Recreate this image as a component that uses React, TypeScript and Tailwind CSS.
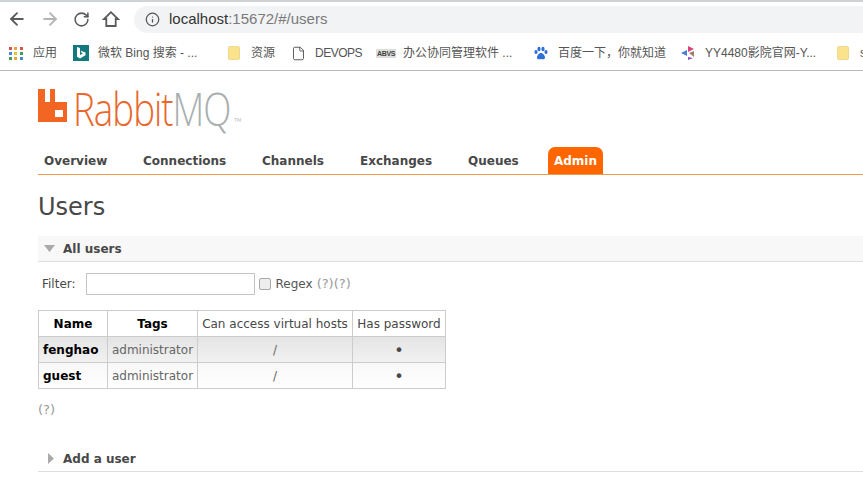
import { ArrowLeft, ArrowRight, RotateCw, Info, File } from "lucide-react";

const CJK = "font-['Liberation_Sans','Noto_Sans_CJK_SC',sans-serif]";
const VERDANA = "font-['DejaVu_Sans',sans-serif]";

const NAV = [
  { label: "Overview", w: "w-[99px]" },
  { label: "Connections", w: "w-[119px]" },
  { label: "Channels", w: "w-[98px]" },
  { label: "Exchanges", w: "w-[108px]" },
  { label: "Queues", w: "w-[86px]" },
];

const USERS = [
  { name: "fenghao", row: "bg-gradient-to-b from-[#e4e4e4] to-[#f2f2f2]" },
  { name: "guest", row: "bg-gradient-to-b from-[#f8f8f8] to-white" },
];

function Folder() {
  return <div className="w-[12px] h-[14px] rounded-[2px] bg-[#fbe38e] border border-[#eed98f]" />;
}

function AppsGrid() {
  const colors = ["#d9534f", "#e8a33d", "#d9534f", "#4a86d8", "#e8c33d", "#3f9b55", "#3f9b55", "#e8a33d", "#4a86d8"];
  return (
    <div className="grid grid-cols-3 gap-[2px] w-[14px]">
      {colors.map((c, i) => (
        <svg key={i} width="3" height="3" className="block">
          <rect width="3" height="3" fill={c} />
        </svg>
      ))}
    </div>
  );
}

function Bookmark({ icon, label, w, tight }: { icon: React.ReactNode; label: string; w: string; tight?: boolean }) {
  return (
    <div className={`flex items-center gap-[9px] shrink-0 ${w}`}>
      <div className="w-[16px] flex justify-center shrink-0">{icon}</div>
      <span className={`text-[12px] text-[#555] whitespace-nowrap ${tight ? "tracking-[-0.5px]" : ""}`}>{label}</span>
    </div>
  );
}

export default function App() {
  return (
    <div className={`w-[863px] h-[482px] overflow-hidden bg-white ${CJK}`}>
      <div className="h-[2px] bg-[#cfd3d6]" />
      {/* toolbar */}
      <div className="h-[34px] flex items-center pl-[7px] gap-[13px] bg-white">
        <ArrowLeft size={20} strokeWidth={2.2} className="text-[#5a5a5a] shrink-0" />
        <ArrowRight size={20} strokeWidth={2.2} className="text-[#b4b4b4] shrink-0" />
        <RotateCw size={17} strokeWidth={2.2} className="text-[#5a5a5a] shrink-0" />
        <svg width="18" height="18" viewBox="0 0 18 18" className="shrink-0 -ml-[1px]">
          <path d="M9 2.200 2 9h2.300v7h9.400V9H16z" fill="none" stroke="#5a5a5a" strokeWidth="1.800" strokeLinejoin="miter" />
        </svg>
        <div className="flex-1 h-[27px] -mr-[10px] ml-[1px] rounded-l-full bg-[#f1f3f4] flex items-center pl-[11px] gap-[9px]">
          <Info size={15} strokeWidth={2} className="text-[#555]" />
          <span className="text-[15px] text-[#333]">
            localhost<span className="text-[#7a7a7a]">:15672/#/users</span>
          </span>
        </div>
      </div>
      {/* bookmarks */}
      <div className="h-[35px] flex items-center pl-[8px] border-b border-[#b9b9b9] overflow-hidden">
        <Bookmark icon={<AppsGrid />} label="应用" w="w-[65px]" />
        <Bookmark
          icon={
            <svg width="16" height="16" viewBox="0 0 16 16">
              <rect width="16" height="16" fill="#13797d" />
              <path d="M4 2l3 1v7l3-1.500-1.500-.7-.8-2L12.500 7.500v2.800L7 13.500l-3-1.700z" fill="#fff" />
            </svg>
          }
          label="微软 Bing 搜索 - ..."
          w="w-[153px]"
        />
        <Bookmark icon={<Folder />} label="资源" w="w-[64px]" />
        <Bookmark icon={<File size={15} strokeWidth={1.5} className="text-[#555]" />} label="DEVOPS" w="w-[88px]" tight />
        <Bookmark
          icon={
            <span className="text-[7px] font-bold leading-[9px] tracking-tighter text-[#444] bg-[#ddd] px-px">ABVS</span>
          }
          label="办公协同管理软件 ..."
          w="w-[155px]"
        />
        <Bookmark
          icon={
            <svg width="14" height="15" viewBox="0 0 14 15">
              <g fill="#2f6fd8">
                <ellipse cx="2" cy="6" rx="1.600" ry="2" />
                <ellipse cx="5" cy="3" rx="1.600" ry="2.200" />
                <ellipse cx="9" cy="3" rx="1.600" ry="2.200" />
                <ellipse cx="12" cy="6" rx="1.600" ry="2" />
                <path d="M7 7c-2 0-4 2.500-4 4.500 0 2 2 2 4 1.500 2 .5 4 .5 4-1.500C11 9.500 9 7 7 7z" />
              </g>
            </svg>
          }
          label="百度一下，你就知道"
          w="w-[147px]"
        />
        <Bookmark
          icon={
            <svg width="16" height="16" viewBox="0 0 16 16">
              <path d="M1 8l6-3v6z" fill="#4a7fd8" />
              <path d="M8 1l6 3-6 3z" fill="#d8447a" />
              <path d="M9 8l5-2v6z" fill="#a08070" />
              <path d="M8 12l5 1-5 2z" fill="#8a4fc8" />
            </svg>
          }
          label="YY4480影院官网-Y..."
          w="w-[155px]"
        />
        <Bookmark icon={<Folder />} label="s" w="w-[40px]" />
      </div>

      {/* page */}
      <div className={`pl-[38px] ${VERDANA}`}>
        {/* logo */}
        <div className="h-[67px] pt-[12px] flex items-start">
          <svg width="30" height="33" viewBox="0 0 30 33" className="mt-[6px] shrink-0">
            <path
              fillRule="evenodd"
              d="M0 0h7v13h5V0h5v13h12v20H0zM17 21v7h8v-7z"
              fill="#f26522"
            />
          </svg>
          <div className="w-[158px] ml-[5px] origin-left scale-x-[0.8] shrink-0">
            <span className="text-[46px] leading-[50px] font-['Open_Sans',sans-serif] font-light tracking-[-1.3px] text-[#e8682e] whitespace-nowrap">
              Rabbit<span className="text-[#a9afaf]">MQ</span>
            </span>
          </div>
          <span className="text-[5px] leading-[6px] text-[#bbb] mt-[34px] ml-[3px]">TM</span>
        </div>

        {/* nav */}
        <div className="h-[37px] flex items-end border-b border-[#ee9a4d]">
          {NAV.map((n) => (
            <div key={n.label} className={`${n.w} h-[27px] pl-[6px] text-[12px] font-bold leading-[28px] text-[#484848]`}>
              {n.label}
            </div>
          ))}
          <div className="w-[55px] h-[27px] rounded-t-[7px] bg-[#ff6600] text-white text-[12px] font-bold leading-[28px] text-center">
            Admin
          </div>
        </div>

        <h1 className="text-[24px] leading-[30px] mt-[17px] text-[#484848] font-normal">Users</h1>

        {/* all users */}
        <div className="mt-[14px] h-[26px] bg-[#f8f8f8] border-b border-[#ddd] flex items-center pl-[6px]">
          <svg width="11" height="7" viewBox="0 0 11 7" className="shrink-0">
            <path d="M0 0h11L5.500 7z" fill="#aaa" />
          </svg>
          <span className="ml-[8px] text-[12px] font-bold text-[#484848]">All users</span>
        </div>

        <div className="mt-[11px] h-[22px] flex items-center text-[12px] text-[#484848]">
          <span className="ml-[4px]">Filter:</span>
          <div className="ml-[10px] w-[169px] h-[22px] border border-[#c4c4c4] bg-white" />
          <div className="ml-[4px] w-[12px] h-[12px] rounded-[2px] border border-[#aaa] bg-[#eee]" />
          <span className="ml-[5px] text-[#555]">Regex</span>
          <span className="ml-[4px] text-[13px] text-[#999]">(?)(?)</span>
        </div>

        {/* table */}
        <table className="mt-[15px] border-collapse border border-[#ccc] text-[12px] text-[#484848] table-fixed w-[408px]">
          <thead>
            <tr className="h-[26px] bg-white">
              <th className="w-[69px] border border-[#ccc] font-bold text-black">Name</th>
              <th className="w-[90px] border border-[#ccc] font-bold text-black">Tags</th>
              <th className="w-[155px] border border-[#ccc] font-normal whitespace-nowrap">Can access virtual hosts</th>
              <th className="border border-[#ccc] font-normal whitespace-nowrap">Has password</th>
            </tr>
          </thead>
          <tbody>
            {USERS.map((u) => (
              <tr key={u.name} className={`h-[26px] ${u.row}`}>
                <td className="border border-[#ccc] pl-[4px] font-bold text-black">{u.name}</td>
                <td className="border border-[#ccc] text-center text-[#666]">administrator</td>
                <td className="border border-[#ccc] text-center text-[#666]">/</td>
                <td className="border border-[#ccc] text-center text-[16px] leading-[16px] pt-[3px] text-[#484848]">•</td>
              </tr>
            ))}
          </tbody>
        </table>

        <div className="mt-[13px] text-[13px] leading-[15px] text-[#999]">(?)</div>

        {/* add a user */}
        <div className="mt-[29px] h-[26px] border-b border-[#ddd] flex items-center pl-[10px]">
          <svg width="6" height="11" viewBox="0 0 6 11" className="shrink-0">
            <path d="M0 0l6 5.500L0 11z" fill="#aaa" />
          </svg>
          <span className="ml-[9px] text-[12px] font-bold text-[#484848]">Add a user</span>
        </div>
      </div>
    </div>
  );
}
